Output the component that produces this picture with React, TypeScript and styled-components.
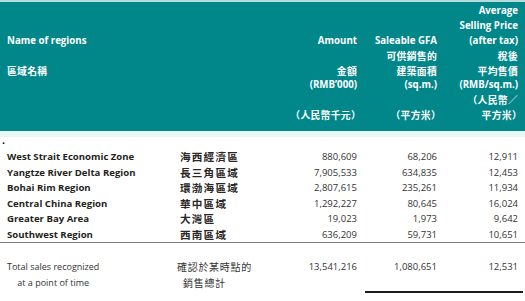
import React from 'react';
import styled, { createGlobalStyle } from 'styled-components';

const GlobalStyle = createGlobalStyle`
  *, *::before, *::after { box-sizing: border-box; }
  html, body { margin: 0; padding: 0; background: #ffffff; }
  body {
    font-family: "Open Sans", "Noto Sans CJK TC", sans-serif;
    color: #231f20;
    line-height: 1;
    min-height: 301px;
  }
`;

const CJK = `"Noto Sans CJK TC", "Noto Sans CJK SC", sans-serif`;
const LATIN = `"Open Sans", "Noto Sans CJK TC", sans-serif`;
const COLS = '180px 100px 77px 80px 81px';

const Page = styled.div`
  width: 525px;
  min-height: 301px;
  padding-bottom: 8px;
  background: #ffffff;
`;

const TopStrip = styled.div`
  height: 2px;
  background: #b4dcdc;
`;

const Header = styled.div`
  background: #01878a;
  display: grid;
  grid-template-columns: ${COLS};
  padding: 2px 0 8px;
`;

const HeadCol = styled.div<{ $align: 'left' | 'right' }>`
  display: flex;
  flex-direction: column;
  align-items: ${(p) => (p.$align === 'left' ? 'flex-start' : 'flex-end')};
  padding-left: ${(p) => (p.$align === 'left' ? '7px' : '0')};
`;

const HeadLine = styled.div<{ $cjk: boolean; $hang: boolean }>`
  height: 14.9px;
  line-height: 14.9px;
  white-space: pre;
  color: #ffffff;
  font-family: ${(p) => (p.$cjk ? CJK : LATIN)};
  font-size: ${(p) => (p.$cjk ? '9.8px' : '9.7px')};
  font-weight: 700;
  letter-spacing: ${(p) => (p.$cjk ? '0.3px' : '0')};
  margin-right: ${(p) => (p.$hang ? '-4px' : '0')};
`;

const LightBand = styled.div`
  height: 6px;
  background: #e9f6f6;
`;

const BulletLine = styled.div`
  height: 12px;
  line-height: 12px;
  padding-left: 2px;
  font-family: ${LATIN};
  font-size: 8px;
  color: #111;
`;

const Row = styled.div<{ $last?: boolean }>`
  display: grid;
  grid-template-columns: ${COLS};
  height: ${(p) => (p.$last ? '16.5px' : '15.5px')};
  line-height: 15.5px;
  border-bottom: ${(p) => (p.$last ? '1px solid #7d7d7d' : 'none')};
`;

const RegionName = styled.div`
  padding-left: 7px;
  font-family: ${LATIN};
  font-size: 9.6px;
  font-weight: 700;
  color: #231f20;
  white-space: nowrap;
`;

const RegionCn = styled.div`
  font-family: ${CJK};
  font-size: 10.6px;
  font-weight: 700;
  letter-spacing: 1.2px;
  color: #2a2627;
  white-space: nowrap;
`;

const Num = styled.div`
  text-align: right;
  font-family: ${LATIN};
  font-size: 9.5px;
  font-weight: 400;
  color: #333;
  white-space: nowrap;
`;

const TotalBlock = styled.div`
  display: grid;
  grid-template-columns: ${COLS};
  align-items: start;
  padding-top: 16px;
  line-height: 15.5px;
`;

const TotalLabel = styled.div`
  justify-self: start;
  margin-left: 7px;
  display: flex;
  flex-direction: column;
  align-items: center;
  font-family: ${LATIN};
  font-size: 9px;
  color: #333;
  white-space: nowrap;
`;

const TotalCn = styled.div`
  display: flex;
  flex-direction: column;
  margin-left: -3px;
  font-family: ${CJK};
  font-size: 10px;
  letter-spacing: 0.7px;
  color: #333;
  white-space: nowrap;
`;

const CnLine = styled.div<{ $indent: number }>`
  height: 15.5px;
  padding-left: ${(p) => p.$indent}px;
`;

const UnderlinedPair = styled.div`
  grid-column: 4 / 6;
  display: grid;
  grid-template-columns: 72px 81px;
  margin-left: 8px;
  margin-right: -5px;
  padding-right: 5px;
  height: 34px;
  border-bottom: 2.5px solid #1c1c1c;
`;

type HeadSpec = { lines: string[]; align: 'left' | 'right' };

const headCols: HeadSpec[] = [
  { lines: ['', '', 'Name of regions', '', '區域名稱', '', '', ''], align: 'left' },
  { lines: ['', '', '', '', '', '', '', ''], align: 'left' },
  { lines: ['', '', 'Amount', '', '金額', '(RMB’000)', '', '（人民幣千元）'], align: 'right' },
  { lines: ['', '', 'Saleable GFA', '可供銷售的', '建築面積', '(sq.m.)', '', '（平方米）'], align: 'right' },
  {
    lines: ['Average', 'Selling Price', '(after tax)', '稅後', '平均售價', '(RMB/sq.m.)', '（人民幣／', '平方米）'],
    align: 'right',
  },
];

const isCjk = (s: string) => /[\u3000-\u9fff\uff00-\uffef]/.test(s);

const regions = [
  ['West Strait Economic Zone', '海西經濟區', '880,609', '68,206', '12,911'],
  ['Yangtze River Delta Region', '長三角區域', '7,905,533', '634,835', '12,453'],
  ['Bohai Rim Region', '環渤海區域', '2,807,615', '235,261', '11,934'],
  ['Central China Region', '華中區域', '1,292,227', '80,645', '16,024'],
  ['Greater Bay Area', '大灣區', '19,023', '1,973', '9,642'],
  ['Southwest Region', '西南區域', '636,209', '59,731', '10,651'],
];

export default function App() {
  return (
    <>
      <GlobalStyle />
      <Page>
        <TopStrip />
        <Header>
          {headCols.map((col, ci) => (
            <HeadCol key={ci} $align={col.align}>
              {col.lines.map((l, li) => (
                <HeadLine key={li} $cjk={isCjk(l)} $hang={l.endsWith('）')}>
                  {l || ' '}
                </HeadLine>
              ))}
            </HeadCol>
          ))}
        </Header>
        <LightBand />
        <BulletLine>•</BulletLine>
        {regions.map((r, i) => (
          <Row key={r[0]} $last={i === regions.length - 1}>
            <RegionName>{r[0]}</RegionName>
            <RegionCn>{r[1]}</RegionCn>
            <Num>{r[2]}</Num>
            <Num>{r[3]}</Num>
            <Num>{r[4]}</Num>
          </Row>
        ))}
        <TotalBlock>
          <TotalLabel>
            <span>Total sales recognized</span>
            <span>at a point of time</span>
          </TotalLabel>
          <TotalCn>
            <CnLine $indent={0}>確認於某時點的</CnLine>
            <CnLine $indent={6}>銷售總計</CnLine>
          </TotalCn>
          <Num>13,541,216</Num>
          <UnderlinedPair>
            <Num>1,080,651</Num>
            <Num>12,531</Num>
          </UnderlinedPair>
        </TotalBlock>
      </Page>
    </>
  );
}
